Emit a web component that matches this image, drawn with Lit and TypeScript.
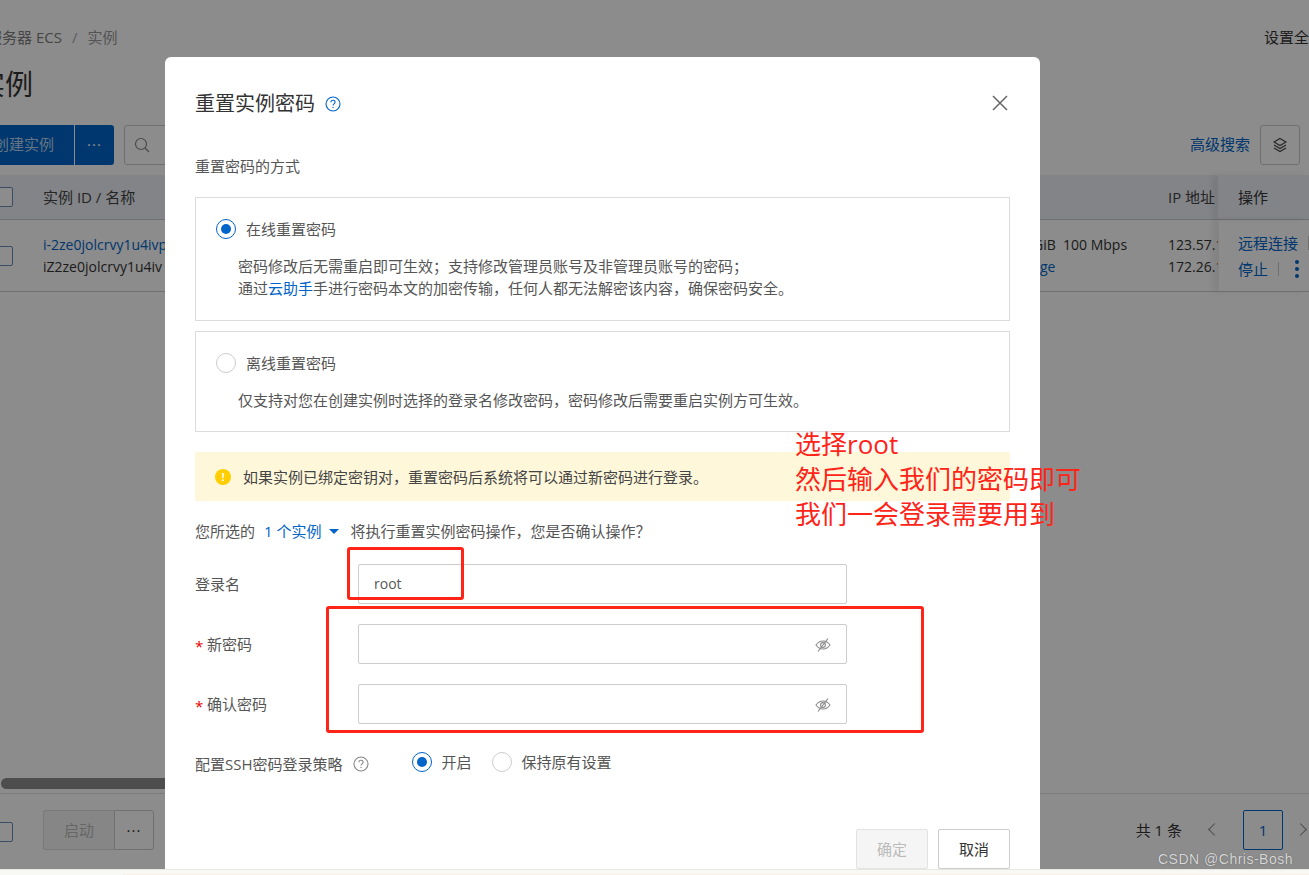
import { LitElement, html, css } from "lit";
import { customElement } from "lit/decorators.js";

const eye = html`<svg class="eye" viewBox="0 0 16 16" fill="none" stroke="#8a8a8a" stroke-width="1.1">
  <path d="M1 8c1.800-2.600 4.200-4 7-4s5.200 1.400 7 4c-1.800 2.600-4.200 4-7 4s-5.200-1.400-7-4z"/>
  <circle cx="8" cy="8" r="2.400"/><path d="M3 14.500 13 1.500"/></svg>`;

const help = (c: string) => html`<svg class="help" viewBox="0 0 16 16" fill="none" stroke="${c}" stroke-width="1.1">
  <circle cx="8" cy="8" r="7"/><path d="M5.900 6.300c0-1.200 1-2 2.100-2s2.100.8 2.100 1.900c0 1.700-2.100 1.700-2.100 3.300"/>
  <circle cx="8" cy="11.400" r=".7" fill="${c}" stroke="none"/></svg>`;

@customElement("app-root")
export class AppRoot extends LitElement {
  static styles = css`
    :host { display: block; width: 1309px; height: 875px; position: relative; overflow: hidden; background: #fff;
      font: 15px/22px "Open Sans", "Noto Sans CJK SC", sans-serif; color: #333; }
    * { box-sizing: border-box; }
    .lt { font-size: 14px; }
    .page { width: 1309px; height: 869px; background: #fff; display: flex; flex-direction: column; padding-top: 26px; overflow: hidden; position: relative; }
    .crumb { display: flex; height: 22px; justify-content: space-between; }
    .crumb .l { margin-left: -13px; color: #808080; white-space: nowrap; }
    .crumb .sep { margin: 0 10px; color: #aaa; }
    .crumb .cur { color: #999; }
    .crumb .r { width: 45px; white-space: nowrap; overflow: hidden; color: #333; }
    .title { font-size: 28px; line-height: 40px; margin: 16px 0 0 -23px; color: #333; }
    .tools { display: flex; height: 40px; margin-top: 21px; align-items: stretch; }
    .primary { width: 101px; margin-left: -26px; background: #0064c8; color: #b8d4f0; display: flex; align-items: center; justify-content: flex-end; padding: 0 20px 2px 0; border-right: 1px solid #fff; white-space: nowrap; }
    .more { width: 39px; background: #0064c8; color: #fff; border-radius: 0 3px 3px 0; display: flex; align-items: center; justify-content: center; letter-spacing: 1px; line-height: 1; padding-bottom: 9px; }
    .search { width: 300px; margin-left: 10px; border: 1px solid #ccc; border-radius: 3px; display: flex; align-items: center; padding-left: 9px; }
    .search svg { width: 16px; height: 16px; }
    .spring { flex: 1; }
    .adv { color: #0064c8; align-self: center; margin: 0 10px 3px 0; }
    .layers { width: 40px; height: 40px; border: 1px solid #ccc; border-radius: 3px; margin-right: 9px; display: flex; align-items: center; justify-content: center; }
    .layers svg { width: 16px; height: 16px; }
    .thead { display: flex; height: 45px; margin-top: 10px; background: #edf0f6; border-bottom: 1px solid #ccc; align-items: center; }
    .trow { display: flex; height: 72px; border-bottom: 1px solid #ccc; align-items: center; font-size: 14px; }
    .box { width: 20px; height: 20px; border: 1px solid #6a8db5; border-radius: 2px; margin-left: -7px; flex: none; background: #fff; }
    .c1 { margin-left: 30px; width: 1175px; flex: none; }
    .ipcol { width: 50px; flex: none; overflow: hidden; white-space: nowrap; }
    .opcol { flex: 1; align-self: stretch; padding-left: 19px; box-shadow: -6px 0 6px rgba(0,0,0,.07); display: flex; flex-direction: column; justify-content: center; border-left: 1px solid #f0f0f0; font-size: 15px; white-space: nowrap; }
    .thead .opcol { background: #edf0f6; }
    .thead .c1 { color: #444; }
    .cells { display: flex; justify-content: space-between; }
    .spec { width: 185px; white-space: nowrap; }
    .two { display: flex; flex-direction: column; }
    .ge { margin-left: 7px; }
    .ipname { width: 50px; white-space: nowrap; }
    .link { color: #0064c8; }
    .ops { display: flex; align-items: center; white-space: nowrap; line-height: 26px; }
    .pipe { width: 1px; height: 14px; background: #ccc; margin-left: 10px; flex: none; }
    .vdots { display: flex; flex-direction: column; gap: 3px; margin-left: 16px; }
    .vdots i { width: 4px; height: 4px; border-radius: 50%; background: #0064c8; }
    .track { height: 11px; width: 700px; margin-top: 486px; margin-left: 1px; border-radius: 6px; background: #8c8c8c; flex: none; }
    .foot { border-top: 1px solid #e3e3e3; margin-top: 4px; height: 76px; display: flex; align-items: flex-start; padding-top: 16px; }
    .foot .box { margin-top: 12px; }
    .btn0 { margin-left: 30px; width: 71px; height: 40px; background: #f5f5f5; border: 1px solid #ddd; border-right: 0; border-radius: 3px 0 0 3px; color: #bbb; display: flex; align-items: center; justify-content: center; }
    .btn1 { width: 40px; height: 40px; border: 1px solid #ccc; border-radius: 0 3px 3px 0; display: flex; align-items: center; justify-content: center; line-height: 1; letter-spacing: 1px; padding-bottom: 8px; }
    .count { margin-left: auto; margin-right: 1px; line-height: 40px; white-space: nowrap; }
    .prev, .next { width: 9px; height: 9px; border-left: 1px solid #888; border-bottom: 1px solid #888; transform: rotate(45deg); margin: 15px 0 0 27px; flex: none; }
    .next { transform: rotate(225deg); margin: 15px 4px 0 13px; }
    .pg { width: 40px; height: 40px; margin-left: 24px; border: 1px solid #0064c8; border-radius: 2px; color: #0064c8; display: flex; align-items: center; justify-content: center; flex: none; }

    .scrim { position: absolute; left: 0; top: 0; width: 1309px; height: 869px; background: rgba(0,0,0,.45); }
    .strip { position: absolute; left: 0; top: 869px; width: 1309px; height: 6px; background: #f8f8f4; border-top: 1px solid #e6e6e6; display: flex; }
    .strip i { display: block; margin: 4px 0 0 123px; flex: 1; background: #f8f2e6; }
    .wm { position: absolute; left: 1158px; top: 848px; color: #d8d8d8; font: 14px/22px "Liberation Sans", sans-serif; letter-spacing: .5px; text-shadow: 0 0 1px #555; }

    .modal { position: absolute; left: 165px; top: 57px; width: 875px; height: 812px; background: #fff; border-radius: 6px 6px 0 0; padding: 0 30px; display: flex; flex-direction: column; color: #555; }
    .mhead { display: flex; align-items: center; height: 30px; margin-top: 32px; color: #333; font-size: 20px; }
    .mhead .help { width: 16px; height: 16px; margin-left: 10px; }
    .help { width: 16px; height: 16px; flex: none; }
    .close { width: 18px; height: 18px; margin: -2px 1px 0 auto; }
    .sub { margin-top: 36px; height: 22px; }
    .card { border: 1px solid #dcdcdc; padding: 0 20px; }
    .c-a { margin-top: 20px; height: 124px; }
    .c-b { margin-top: 10px; height: 101px; }
    .rd { display: flex; align-items: center; height: 20px; gap: 10px; margin-top: 21px; }
    .radio { width: 20px; height: 20px; border-radius: 50%; border: 1px solid #ccc; flex: none; display: flex; align-items: center; justify-content: center; }
    .radio.on { border-color: #0064c8; }
    .radio.on::after { content: ""; width: 10px; height: 10px; border-radius: 50%; background: #0064c8; }
    .desc { margin: 0 0 0 22px; white-space: nowrap; }
    .c-a .desc { margin-top: 16px; }
    .c-b .desc { margin-top: 16px; }
    .alert { margin-top: 20px; height: 49px; background: #fff7da; border-radius: 2px; display: flex; align-items: center; padding-left: 20px; gap: 12px; color: #444; }
    .warn { width: 16px; height: 16px; border-radius: 50%; background: #ffce00; color: #fff; font: 700 11px/16px "Liberation Sans", sans-serif; text-align: center; flex: none; }
    .confirm { margin-top: 19px; height: 22px; display: flex; align-items: center; white-space: nowrap; }
    .confirm .n { color: #0064c8; margin: 0 7px 0 9px; }
    .tri { width: 0; height: 0; border: 5px solid transparent; border-top: 5px solid #0064c8; border-bottom: 0; margin-right: 12px; }
    .form { margin-top: 22px; display: flex; flex-direction: column; gap: 20px; }
    .frow { display: flex; align-items: center; height: 40px; }
    .lab { width: 163px; flex: none; position: relative; }
    .lab.req { padding-left: 12px; }
    .lab.req::before { content: "*"; position: absolute; left: 0; top: 2px; color: #e60000; }
    .input { width: 489px; height: 40px; border: 1px solid #ccc; border-radius: 2px; display: flex; align-items: center; padding: 0 15px; }
    .eye { width: 16px; height: 16px; margin: 1px 0 0 auto; }
    .ssh { display: flex; align-items: center; height: 22px; margin-top: 27px; white-space: nowrap; }
    .ssh .t { margin-top: 3px; }
    .ssh .help { margin: 3px 0 0 10px; }
    .ssh .r1 { margin-left: 43px; }
    .ssh .radio { margin-right: 10px; }
    .ssh .gap { width: 20px; }
    .mfoot { margin-top: auto; display: flex; justify-content: flex-end; gap: 10px; }
    .mbtn { width: 72px; height: 40px; border: 1px solid #ccc; border-radius: 2px; display: flex; align-items: center; justify-content: center; color: #333; }
    .mbtn.off { background: #f5f5f5; border-color: #e3e3e3; color: #bbb; }

    .mark { position: absolute; border: 3px solid #ff2418; border-radius: 3px; }
    .m1 { left: 347px; top: 547px; width: 117px; height: 53px; }
    .m2 { left: 326px; top: 606px; width: 598px; height: 127px; }
    .note { position: absolute; left: 795px; top: 427px; color: #ff2418; font: 26px/35px "Open Sans", "Noto Sans CJK SC", sans-serif; white-space: nowrap; }
  `;

  render() {
    return html`
      <div class="page">
        <div class="crumb"><div class="l">服务器 ECS<span class="sep">/</span><span class="cur">实例</span></div><div class="r">设置全局</div></div>
        <div class="title">实例</div>
        <div class="tools">
          <div class="primary">创建实例</div><div class="more">...</div>
          <div class="search"><svg viewBox="0 0 16 16" fill="none" stroke="#888" stroke-width="1.2"><circle cx="7" cy="7" r="5.500"/><path d="m11 11 4 4"/></svg></div>
          <div class="spring"></div>
          <div class="adv">高级搜索</div>
          <div class="layers"><svg viewBox="0 0 16 16" fill="none" stroke="#444" stroke-width="1.1"><path d="M8 1.500 14 5 8 8.500 2 5z"/><path d="M2 8l6 3.500L14 8"/><path d="M2 11l6 3.500 6-3.500"/></svg></div>
        </div>
        <div class="thead">
          <div class="box"></div>
          <div class="c1 cells"><span>实例 ID / 名称</span><span class="ipname">IP 地址</span></div>
          <div class="opcol">操作</div>
        </div>
        <div class="trow">
          <div class="box"></div>
          <div class="c1 cells">
            <div class="two"><span class="link">i-2ze0jolcrvy1u4ivp</span><span>iZ2ze0jolcrvy1u4iv</span></div>
            <div class="cells spec">
              <div class="two"><span>GiB&nbsp; 100 Mbps</span><span class="link ge">ge</span></div>
              <div class="two ipcol"><span>123.57.1</span><span>172.26.1</span></div>
            </div>
          </div>
          <div class="opcol">
            <div class="ops"><span class="link">远程连接</span><span class="pipe"></span></div>
            <div class="ops"><span class="link">停止</span><span class="pipe"></span><span class="vdots"><i></i><i></i><i></i></span></div>
          </div>
        </div>
        <div class="track"></div>
        <div class="foot">
          <div class="box"></div>
          <div class="btn0">启动</div><div class="btn1">...</div>
          <div class="count">共 1 条</div>
          <div class="prev"></div><div class="pg">1</div><div class="next"></div>
        </div>
      </div>
      <div class="scrim"></div>
      <div class="strip"><i></i></div>
      <div class="modal">
        <div class="mhead">重置实例密码 ${help("#0064c8")}
          <svg class="close" viewBox="0 0 18 18" fill="none" stroke="#666" stroke-width="1.5"><path d="M2 2l14 14M16 2 2 16"/></svg>
        </div>
        <div class="sub">重置密码的方式</div>
        <div class="card c-a">
          <div class="rd"><span class="radio on"></span>在线重置密码</div>
          <div class="desc">密码修改后无需重启即可生效；支持修改管理员账号及非管理员账号的密码；<br>通过<span class="link">云助手</span>手进行密码本文的加密传输，任何人都无法解密该内容，确保密码安全。</div>
        </div>
        <div class="card c-b">
          <div class="rd"><span class="radio"></span>离线重置密码</div>
          <div class="desc">仅支持对您在创建实例时选择的登录名修改密码，密码修改后需要重启实例方可生效。</div>
        </div>
        <div class="alert"><span class="warn">!</span>如果实例已绑定密钥对，重置密码后系统将可以通过新密码进行登录。</div>
        <div class="confirm">您所选的<span class="n">1 个实例</span><span class="tri"></span>将执行重置实例密码操作，您是否确认操作？</div>
        <div class="form">
          <div class="frow"><div class="lab">登录名</div><div class="input"><span class="lt">root</span></div></div>
          <div class="frow"><div class="lab req">新密码</div><div class="input">${eye}</div></div>
          <div class="frow"><div class="lab req">确认密码</div><div class="input">${eye}</div></div>
        </div>
        <div class="ssh"><span class="t">配置SSH密码登录策略</span>${help("#888")}<span class="radio on r1"></span>开启<span class="gap"></span><span class="radio"></span>保持原有设置</div>
        <div class="mfoot"><div class="mbtn off">确定</div><div class="mbtn">取消</div></div>
      </div>
      <div class="mark m1"></div>
      <div class="mark m2"></div>
      <div class="note">选择root<br>然后输入我们的密码即可<br>我们一会登录需要用到</div>
      <div class="wm">CSDN @Chris-Bosh</div>
    `;
  }
}
